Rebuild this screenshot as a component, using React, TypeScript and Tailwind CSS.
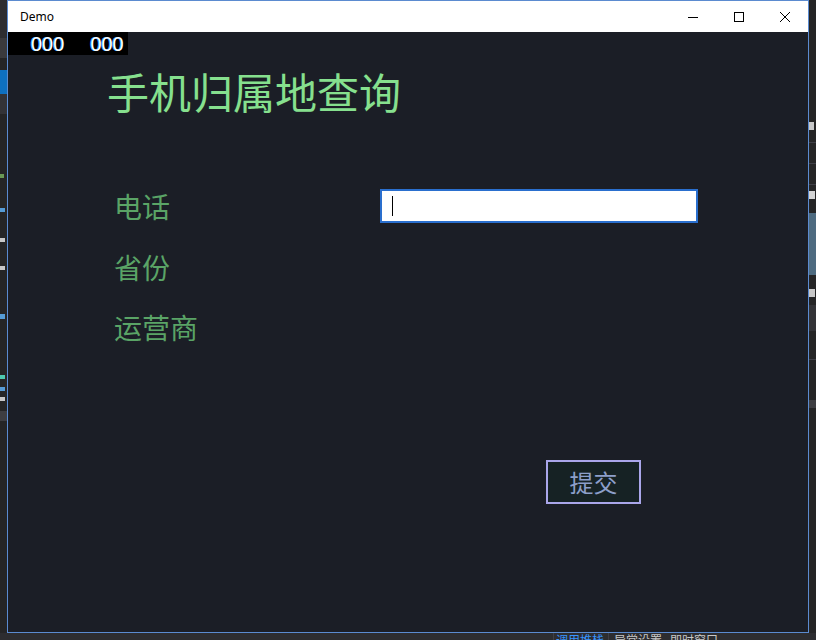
import React from "react";

const cjk = { fontFamily: '"Noto Sans CJK SC", "Noto Sans", sans-serif' };

function CaptionButtons() {
  return (
    <div className="flex h-full">
      <div className="w-[46px] h-full flex items-center justify-center">
        <svg width="12" height="12" viewBox="0 0 12 12">
          <path d="M1 6.5h10" stroke="#000" strokeWidth="1" />
        </svg>
      </div>
      <div className="w-[46px] h-full flex items-center justify-center">
        <svg width="12" height="12" viewBox="0 0 12 12">
          <rect x="1.5" y="1.5" width="9" height="9" fill="none" stroke="#000" strokeWidth="1" />
        </svg>
      </div>
      <div className="w-[46px] h-full flex items-center justify-center">
        <svg width="12" height="12" viewBox="0 0 12 12">
          <path d="M1 1l10 10M11 1L1 11" stroke="#000" strokeWidth="1" />
        </svg>
      </div>
    </div>
  );
}

function LeftStrip() {
  return (
    <div className="w-[7px] h-full bg-[#252526] flex flex-col">
      <div className="h-[38px] bg-[#2d2d30]" />
      <div className="h-[20px] bg-[#3a3a3d]" />
      <div className="h-[12px]" />
      <div className="h-[24px] bg-[#0e70c0]" />
      <div className="h-[20px] bg-[#333337]" />
      <div className="h-[60px]" />
      <div className="h-[4px] w-[4px] bg-[#6a9955]" />
      <div className="h-[30px]" />
      <div className="h-[4px] w-[5px] bg-[#569cd6]" />
      <div className="h-[26px]" />
      <div className="h-[4px] w-[5px] bg-[#c8c8c8]" />
      <div className="h-[24px]" />
      <div className="h-[4px] w-[5px] bg-[#c8c8c8]" />
      <div className="h-[44px]" />
      <div className="h-[5px] w-[5px] bg-[#569cd6]" />
      <div className="h-[56px]" />
      <div className="h-[4px] w-[5px] bg-[#4ec9b0]" />
      <div className="h-[8px]" />
      <div className="h-[4px] w-[5px] bg-[#569cd6]" />
      <div className="h-[6px]" />
      <div className="h-[4px] w-[5px] bg-[#c8c8c8]" />
      <div className="h-[10px]" />
      <div className="h-[10px] bg-[#3e3e42]" />
      <div className="flex-1" />
    </div>
  );
}

function RightStrip() {
  return (
    <div className="flex-1 h-full bg-[#252526] flex flex-col">
      <div className="h-[122px]" />
      <div className="h-[8px] w-[5px] bg-[#c8c8c8]" />
      <div className="h-[12px]" />
      <div className="h-px bg-[#3f3f46]" />
      <div className="h-[20px]" />
      <div className="h-px bg-[#3f3f46]" />
      <div className="h-[20px]" />
      <div className="h-px bg-[#3f3f46]" />
      <div className="h-[6px]" />
      <div className="h-[8px] w-[6px] bg-[#d4d4d4]" />
      <div className="h-[14px]" />
      <div className="h-[62px] bg-[#4e6b80]" />
      <div className="h-[14px]" />
      <div className="h-[8px] w-[6px] bg-[#c8c8c8]" />
      <div className="h-[8px]" />
      <div className="h-[26px] bg-[#333337]" />
      <div className="h-[28px]" />
      <div className="h-px bg-[#3f3f46]" />
      <div className="h-[40px]" />
      <div className="h-[8px] bg-[#3e3e42]" />
      <div className="flex-1" />
    </div>
  );
}

export default function App() {
  return (
    <div className="w-[816px] h-[640px] bg-[#2d2d30] overflow-hidden flex flex-col">
      <div className="flex h-[633px]">
        <LeftStrip />
        <div className="w-[802px] h-full border border-[#5b8bd0] flex flex-col bg-[#1b1e26]">
          {/* title bar */}
          <div className="h-[31px] bg-white flex items-center justify-between">
            <span
              className="ml-[12px] text-[12px] text-black"
              style={{ fontFamily: '"Noto Sans", "Liberation Sans", sans-serif' }}
            >
              Demo
            </span>
            <CaptionButtons />
          </div>

          {/* client area */}
          <div className="relative flex-1 flex flex-col" style={cjk}>
            <div
              className="absolute left-0 top-0 w-[120px] h-[23px] bg-black flex items-center text-white text-[20px] leading-none"
              style={{ fontFamily: '"Liberation Sans", sans-serif', textShadow: "-1px 0 #3aa0ff" }}
            >
              <span className="ml-[23px]">000</span>
              <span className="ml-[26px]">000</span>
            </div>

            <h1 className="ml-[99px] mt-[38px] text-[42px] leading-none text-[#86e08e] font-normal">
              手机归属地查询
            </h1>

            <div className="ml-[106px] flex flex-col">
              <div className="mt-[77px] flex items-center">
                <span className="w-[266px] text-[28px] leading-none text-[#5aa466]">电话</span>
                <div className="w-[318px] h-[34px] border-2 border-[#2a6fce] bg-white flex items-center pl-[10px]">
                  <div className="w-px h-[20px] bg-black" />
                </div>
              </div>
              <span className="mt-[30px] text-[28px] leading-none text-[#5aa466]">省份</span>
              <span className="mt-[32px] text-[28px] leading-none text-[#5aa466]">运营商</span>

              <button className="ml-[432px] mt-[119px] w-[95px] h-[44px] border-2 border-[#aaa6ea] bg-[#162224] text-[24px] leading-none text-[#8d9fca] flex items-center justify-center">
                提交
              </button>
            </div>
          </div>
        </div>
        <RightStrip />
      </div>

      {/* bottom strip from IDE behind */}
      <div className="h-[7px] flex overflow-hidden text-[12px] leading-none" style={cjk}>
        <div className="w-[553px]" />
        <div className="w-px bg-[#3f3f46]" />
        <span className="ml-[2px] mt-[1px] text-[#3794ff]">调用堆栈</span>
        <div className="ml-[4px] w-px bg-[#3f3f46]" />
        <span className="ml-[5px] mt-[1px] text-[#c8c8c8]">异常设置</span>
        <span className="ml-[8px] mt-[1px] text-[#c8c8c8]">即时窗口</span>
      </div>
    </div>
  );
}
